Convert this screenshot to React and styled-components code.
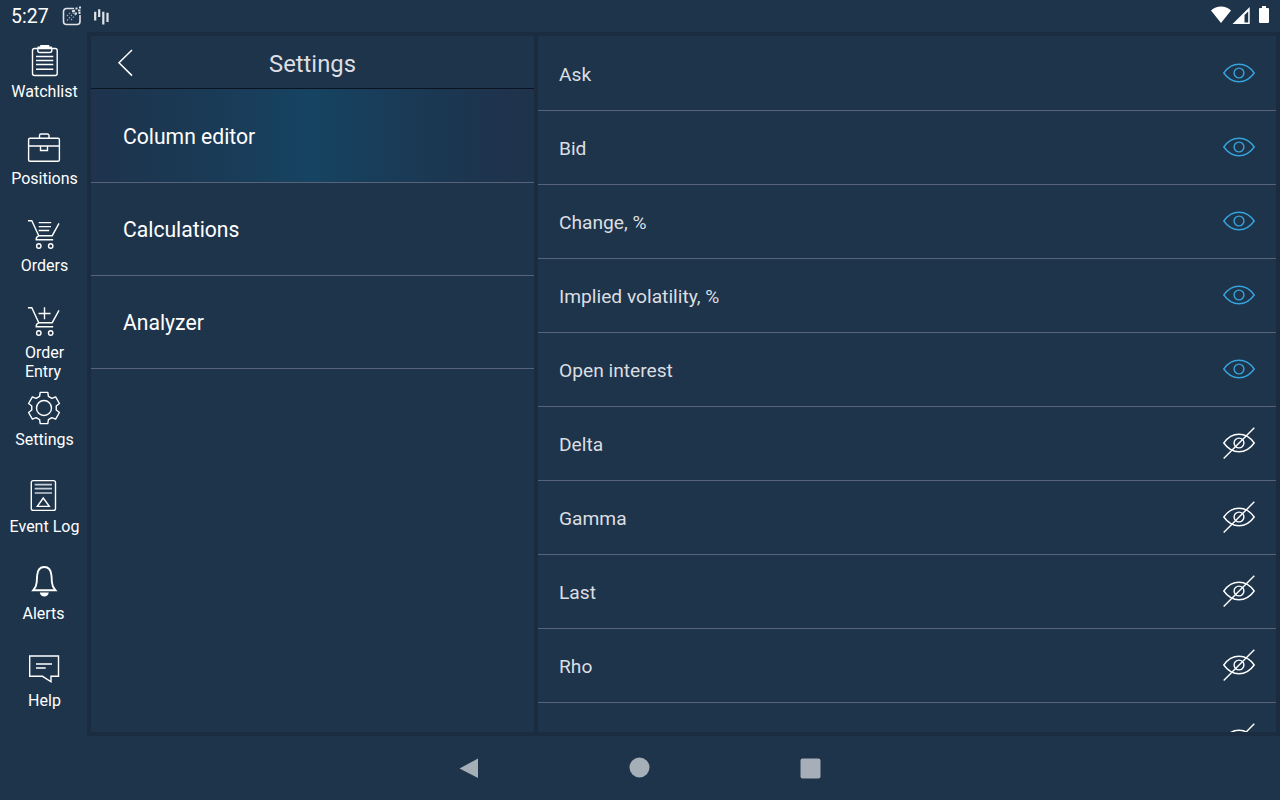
import React from 'react';
import styled, { createGlobalStyle } from 'styled-components';

const GlobalStyle = createGlobalStyle`
  * { box-sizing: border-box; }
  body {
    margin: 0;
    background: #1e344b;
    color: #fff;
    font-family: Roboto, sans-serif;
    overflow: hidden;
  }
`;

const Screen = styled.div`
  display: flex;
  flex-direction: column;
  width: 1280px;
  height: 800px;
  background: #1e344b;
`;

const StatusBar = styled.header`
  display: flex;
  align-items: center;
  height: 32px;
  padding: 0 10px 0 11px;
`;

const Clock = styled.span`
  width: 48px;
  padding-top: 1px;
  font-size: 19.5px;
  line-height: 31px;
`;

const StatusSpacer = styled.span`
  flex: 1;
`;

const Body = styled.div`
  display: flex;
  height: 704px;
`;

const Sidebar = styled.nav`
  width: 87px;
  padding-top: 9px;
`;

const SideItem = styled.div`
  display: flex;
  flex-direction: column;
  align-items: center;
  height: 87px;
`;

const SideIcon = styled.svg`
  display: block;
  flex: none;
  align-self: flex-start;
  margin-left: 24px;
  width: 40px;
  height: 40px;
  fill: none;
  stroke: #fff;
  stroke-width: 1.4;
`;

const SideLabel = styled.span`
  margin-top: 1px;
  padding-left: ${(p) => (p.$narrow ? 0 : 2)}px;
  font-size: 16px;
  line-height: 19px;
  white-space: pre;
`;

const Frame = styled.main`
  display: flex;
  flex: 1;
  gap: 4px;
  padding: 4px;
  background: #1b2c41;
`;

const Panel = styled.section`
  width: ${(p) => p.$width}px;
  background: #1e344b;
  overflow: hidden;
`;

const PanelHeader = styled.div`
  display: flex;
  align-items: center;
  height: 53px;
  padding-left: 26px;
  border-bottom: 1px solid #0b1420;
`;

const BackIcon = styled.svg`
  width: 18px;
  height: 30px;
  fill: none;
  stroke: #fff;
  stroke-width: 1.5;
`;

const Title = styled.h1`
  flex: 1;
  margin: 3px 44px 0 0;
  padding-left: 44px;
  padding-right: 44px;
  color: #dcdee2;
  font-size: 23.8px;
  font-weight: 400;
  line-height: 28px;
  text-align: center;
`;

const MenuRow = styled.div`
  display: flex;
  align-items: center;
  height: ${(p) => (p.$active ? 94 : 93)}px;
  padding: ${(p) => (p.$active ? 2 : 1)}px 32px 0;
  border-bottom: 1px solid #56637a;
  font-size: 21.15px;
  line-height: 25px;
  background: ${(p) =>
    p.$active
      ? 'linear-gradient(90deg, #1f334d 0%, #1b3852 18%, #193d5a 35%, #154462 49%, #183e5b 62%, #1b3751 80%, #1f334d 94%, #1e344b 100%)'
      : 'none'};
`;

const ColumnList = styled.div`
  padding-top: 1px;
`;

const ColumnRow = styled.div`
  display: flex;
  align-items: center;
  justify-content: space-between;
  height: 74px;
  padding: 0 20px 0 21px;
  border-bottom: 1px solid #56637a;
  color: #dcdee2;
  font-size: 19.2px;
  line-height: 22px;
`;

const ColumnName = styled.span`
  padding-top: 2px;
`;

const EyeIcon = styled.svg`
  width: 34px;
  height: 34px;
  margin-bottom: 1px;
  fill: none;
  stroke: ${(p) => (p.$visible ? '#36a3dc' : '#fff')};
  stroke-width: 1.4;
`;

const NavBar = styled.footer`
  display: flex;
  justify-content: center;
  align-items: center;
  gap: 147px;
  height: 64px;
`;

const NavIcon = styled.svg`
  width: 24px;
  height: 24px;
  fill: #a6aeb8;
`;

const Cart = () => (
  <>
    <path d="M4 5.7h3.8l7 15h13.4L35 8.3" />
    <path d="M14.8 20.7c-2 1-2.8 2.4-2.6 4h17" />
    <circle cx="14.8" cy="31" r="2.2" />
    <circle cx="26.7" cy="31" r="2.2" />
  </>
);

const gearPath = (() => {
  const tooth = [[-4.4, -11.6], [-3.8, -15.6], [3.8, -15.6], [4.4, -11.6]];
  const points = [];
  for (let i = 0; i < 6; i += 1) {
    const c = Math.cos((i * Math.PI) / 3);
    const s = Math.sin((i * Math.PI) / 3);
    tooth.forEach(([x, y]) =>
      points.push(`${(20 + x * c - y * s).toFixed(2)} ${(19 + x * s + y * c).toFixed(2)}`)
    );
  }
  return `M${points.join('L')}Z`;
})();

const icons = {
  watchlist: (
    <>
      <path d="M13.5 7.5H10.5a2 2 0 0 0-2 2v23a2 2 0 0 0 2 2h20.7a2 2 0 0 0 2-2v-23a2 2 0 0 0-2-2H28" />
      <path d="M13.8 7.5h14v2a2 2 0 0 1-2 2h-10a2 2 0 0 1-2-2z" />
      <path d="M13.5 8V5.5h2.7V4h9v1.5h2.7V8z" fill="#fff" stroke="none" />
      <path d="M12 15.5h17.3M12 19.5h17.3M12 23.5h17.3M12 28.2h17.3" />
    </>
  ),
  positions: (
    <>
      <rect x="4.6" y="10.3" width="30.8" height="23" rx="1.5" />
      <path d="M15.5 10V7.5a1.5 1.5 0 0 1 1.5-1.5h6.5a1.5 1.5 0 0 1 1.5 1.5V10M4.6 18h30.8M16.5 18v4.5h7V18" />
    </>
  ),
  orders: (
    <>
      <Cart />
      <path d="M14.7 7.6h12.5M14.7 11.6h12.3M14.7 15.5h10.5" />
    </>
  ),
  entry: (
    <>
      <Cart />
      <path d="M20.5 5.3v12M14.5 11.5h12" />
    </>
  ),
  settings: (
    <>
      <path d={gearPath} strokeLinejoin="round" />
      <circle cx="20" cy="19" r="7.5" />
    </>
  ),
  log: (
    <>
      <rect x="7.3" y="4.6" width="24.2" height="29.8" rx="2" />
      <path d="M10.7 8.7H28M10.7 12.7H28M10.7 17H28" stroke="#c9ced5" strokeWidth="1.7" />
      <path d="M19.3 22l-6 8.4h12z" />
    </>
  ),
  alerts: (
    <>
      <path
        d="M9.3 27.2h22.1c-2-2.2-3.3-4.5-3.5-8l-.4-6.5C27.1 6.7 24.2 4 20.3 4s-6.8 2.7-7.2 8.7l-.4 6.5c-.2 3.5-1.4 5.8-3.4 8z"
        strokeWidth="1.9"
      />
      <path d="M15.8 29.6h9c-.4 2.6-2.2 4-4.5 4s-4.1-1.4-4.5-4z" fill="#fff" stroke="none" />
    </>
  ),
  help: (
    <>
      <path d="M5.7 6h28.8v20.3H27v5.5l-8.5-5.5H5.7z" />
      <path d="M12 14h16M12 18h9.7" />
    </>
  ),
};

const sideItems = [
  ['watchlist', 'Watchlist'],
  ['positions', 'Positions'],
  ['orders', 'Orders'],
  ['entry', 'Order\nEntry'],
  ['settings', 'Settings'],
  ['log', 'Event Log'],
  ['alerts', 'Alerts'],
  ['help', 'Help'],
];

const menu = ['Column editor', 'Calculations', 'Analyzer'];

const columns = [
  ['Ask', true],
  ['Bid', true],
  ['Change, %', true],
  ['Implied volatility, %', true],
  ['Open interest', true],
  ['Delta', false],
  ['Gamma', false],
  ['Last', false],
  ['Rho', false],
  ['', false],
];

const Eye = ({ visible }) => (
  <EyeIcon viewBox="0 0 34 34" $visible={visible}>
    <path d="M1.8 17C5.8 11.3 10.9 8.3 17 8.3S28.2 11.3 32.2 17C28.2 22.7 23.1 25.7 17 25.7S5.8 22.7 1.8 17z" />
    <circle cx="17" cy="17" r="4.9" />
    {!visible && <path d="M1.7 32.5L32.3 1.8" />}
  </EyeIcon>
);

export default function App() {
  return (
    <Screen>
      <GlobalStyle />
      <StatusBar>
        <Clock>5:27</Clock>
        <svg width="54" height="28" viewBox="0 0 54 28" fill="none" stroke="#dfe3e8">
          <path d="M15 6.5H7.5a3 3 0 0 0-3 3v10a3 3 0 0 0 3 3h10.5a3 3 0 0 0 3-3V13" strokeWidth="1.6" />
          <path d="M8 18.5l7-8M12 18l5-6M8 14l4-4" strokeWidth="1.2" strokeDasharray="1.5 1.5" opacity=".7" />
          <path d="M13 9.5l3-1M16.5 6.5h2M20 5.5h2M19 8.5h2.5M15.5 11.5h2.5M19.5 11h2" strokeWidth="1.9" />
          <path d="M36.2 9.7v8.8M40.2 7.3V15M44.3 9.7v12.8M48.5 10.7V20" strokeWidth="2.2" />
        </svg>
        <StatusSpacer />
        <svg width="62" height="24" viewBox="0 0 62 24" fill="#fff">
          <path d="M3 6.5C8.500 1.200 17.500 1.200 23 6.500L13 19z" />
          <path fillRule="evenodd" d="M41.700 3v17H24.500zM40.200 7.500l-3.700 3.600v7.400h3.700z" />
          <path d="M52 4h2V2h4v2h2a1 1 0 0 1 1 1v13a1 1 0 0 1-1 1h-8a1 1 0 0 1-1-1V5a1 1 0 0 1 1-1z" />
        </svg>
      </StatusBar>
      <Body>
        <Sidebar>
          {sideItems.map(([icon, label]) => (
            <SideItem key={icon}>
              <SideIcon viewBox="0 0 40 40">{icons[icon]}</SideIcon>
              <SideLabel $narrow={icon === 'alerts'}>{label}</SideLabel>
            </SideItem>
          ))}
        </Sidebar>
        <Frame>
          <Panel $width={443}>
            <PanelHeader>
              <BackIcon viewBox="0 0 18 30">
                <path d="M15 3L2 15.8l13 12.800" />
              </BackIcon>
              <Title>Settings</Title>
            </PanelHeader>
            {menu.map((name, i) => (
              <MenuRow key={name} $active={i === 0}>{name}</MenuRow>
            ))}
          </Panel>
          <Panel $width={738}>
            <ColumnList>
              {columns.map(([name, visible], i) => (
                <ColumnRow key={i}>
                  <ColumnName>{name}</ColumnName>
                  <Eye visible={visible} />
                </ColumnRow>
              ))}
            </ColumnList>
          </Panel>
        </Frame>
      </Body>
      <NavBar>
        <NavIcon viewBox="0 0 24 24"><path d="M21 2.5v19.500L2.500 12.500z" /></NavIcon>
        <NavIcon viewBox="0 0 24 24"><circle cx="11.5" cy="11.5" r="10" /></NavIcon>
        <NavIcon viewBox="0 0 24 24"><rect x="1.5" y="2.5" width="20" height="20" rx="2" /></NavIcon>
      </NavBar>
    </Screen>
  );
}
